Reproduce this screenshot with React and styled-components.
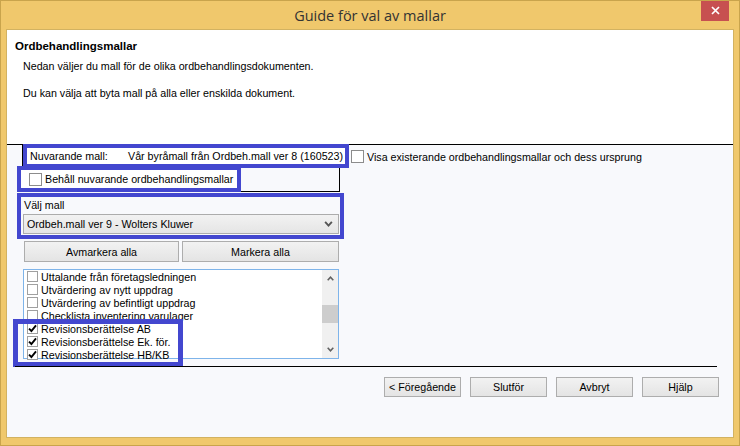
import React from 'react';
import styled, { createGlobalStyle } from 'styled-components';

const HIGHLIGHT = '#4347CF';

const GlobalStyle = createGlobalStyle`
  html, body {
    margin: 0;
    padding: 0;
  }
  body {
    font-family: "Liberation Sans", Arial, sans-serif;
    font-size: 10.7px;
    color: #000;
  }
  * {
    box-sizing: border-box;
  }
`;

const Window = styled.div`
  width: 740px;
  height: 446px;
  background: #F0C86C;
  border: 1px solid #C9A44C;
  display: flex;
  flex-direction: column;
  overflow: hidden;
`;

const TitleBar = styled.div`
  height: 28px;
  flex: none;
  display: grid;
  grid-template-columns: 1fr auto 1fr;
  align-items: start;
`;

const Title = styled.div`
  grid-column: 2;
  font-family: "Open Sans", "Noto Sans", sans-serif;
  font-size: 14.5px;
  color: #333;
  line-height: 28px;
  padding-top: 1px;
`;

const CloseButton = styled.div`
  grid-column: 3;
  justify-self: end;
  width: 28px;
  height: 21px;
  margin: -1px 10px 0 0;
  background: #C75050;
  display: flex;
  align-items: center;
  justify-content: center;
`;

const Frame = styled.div`
  flex: 1;
  margin: 0 5px 7px;
  border: 1px solid #D2B261;
  background: #F8F9FC;
  display: flex;
  flex-direction: column;
`;

const Header = styled.div`
  height: 115px;
  flex: none;
  background: #fff;
  border-bottom: 1px solid #000;
  line-height: 14px;
`;

const HeaderTitle = styled.div`
  font-weight: bold;
  font-size: 11.5px;
  margin: 9px 0 0 8px;
`;

const Intro = styled.p`
  margin: ${p => p.$gap}px 0 0 16px;
`;

const Body = styled.div`
  flex: 1;
  display: flex;
  flex-direction: column;
  align-items: flex-start;
`;

const TopRow = styled.div`
  display: flex;
  align-items: flex-start;
  padding-left: 15px;
`;

const GroupBox = styled.div`
  width: 318px;
  height: 47px;
  border: 1px solid #000;
  border-top: none;
  display: flex;
  flex-direction: column;
`;

const CurrentRow = styled.div`
  flex: none;
  width: 318px;
  height: 16px;
  margin: 3px 0 0 4px;
  padding-left: 3px;
  background: #fff;
  outline: 4px solid ${HIGHLIGHT};
  display: flex;
  align-items: center;
  white-space: nowrap;
`;

const CurrentLabel = styled.span`
  width: 98px;
  flex: none;
`;

const KeepRow = styled.label`
  flex: none;
  width: 216px;
  height: 18px;
  margin: 6px 0 0 -2px;
  padding-left: 8px;
  background: #fff;
  outline: 4px solid ${HIGHLIGHT};
  display: flex;
  align-items: center;
  gap: 3px;
  white-space: nowrap;
`;

const ShowRow = styled.label`
  margin: 5px 0 0 11px;
  display: flex;
  align-items: center;
  gap: 3px;
  white-space: nowrap;
`;

const Box = styled.span`
  flex: none;
  width: ${p => p.$size}px;
  height: ${p => p.$size}px;
  border: 1px solid ${p => p.$border};
  background: #fff;
  display: flex;
  align-items: center;
  justify-content: center;
`;

const ChooseGroup = styled.div`
  width: 319px;
  height: 38px;
  margin: 5px 0 0 14px;
  padding-left: 2px;
  outline: 4px solid ${HIGHLIGHT};
`;

const ChooseLabel = styled.div`
  line-height: 15px;
  padding: 1px 0 0 1px;
`;

const Combo = styled.div`
  width: 316px;
  height: 20px;
  margin-top: 1px;
  border: 1px solid #ACACAC;
  background: linear-gradient(#F2F2F2, #E5E5E5);
  display: flex;
  align-items: center;
  justify-content: space-between;
  padding: 0 5px 0 3px;
`;

const MarkRow = styled.div`
  width: 315px;
  margin: 6px 0 0 17px;
  display: grid;
  grid-template-columns: 155px 157px;
  gap: 3px;
`;

const Button = styled.div`
  width: ${p => p.$width || 'auto'};
  height: ${p => p.$height}px;
  border: 1px solid #ADADAD;
  background: linear-gradient(#F2F2F2, #E4E4E4);
  display: flex;
  align-items: center;
  justify-content: center;
  white-space: nowrap;
`;

const ListBox = styled.div`
  width: 316px;
  height: 90px;
  margin: 7px 0 0 16px;
  border: 1px solid #7EB4EA;
  background: #fff;
  display: flex;
`;

const Items = styled.div`
  flex: 1;
  min-width: 0;
  display: flex;
  flex-direction: column;
`;

const Item = styled.div`
  flex: none;
  height: 13px;
  padding-left: 3px;
  display: flex;
  align-items: center;
  gap: 3px;
  white-space: nowrap;
`;

const MarkedItems = styled.div`
  flex: none;
  width: 164px;
  margin-left: -8px;
  padding: 0 0 3px 8px;
  outline: 5px solid ${HIGHLIGHT};
  outline-offset: -2px;
  display: flex;
  flex-direction: column;
`;

const Scrollbar = styled.div`
  width: 16px;
  flex: none;
  background: #F0F0F0;
  display: flex;
  flex-direction: column;
`;

const ScrollArrow = styled.div`
  height: 17px;
  flex: none;
  display: flex;
  align-items: center;
  justify-content: center;
`;

const Track = styled.div`
  flex: 1;
  padding-top: 18px;
`;

const Thumb = styled.div`
  height: 18px;
  background: #CDCDCD;
`;

const Divider = styled.div`
  align-self: stretch;
  height: 1px;
  margin: 7px 16px 0 8px;
  background: #000;
`;

const Footer = styled.div`
  align-self: stretch;
  margin-top: 10px;
  padding-right: 14px;
  display: flex;
  justify-content: flex-end;
  gap: 9px;
`;

const Check = () => (
  <svg width="9" height="9" viewBox="0 0 9 9">
    <path d="M1 4.6 L3.4 7 L8 1.4" fill="none" stroke="#000" strokeWidth="1.9" />
  </svg>
);

const CheckBox = ({ checked, size = 13, border = '#8C8C8C' }) => (
  <Box $size={size} $border={border}>{checked && <Check />}</Box>
);

const Chevron = ({ up, color = '#606060', w = 7, h = 5 }) => (
  <svg width={w} height={h} viewBox="0 0 7 5">
    <path d={up ? 'M0.7 4.2 L3.5 1.2 L6.3 4.2' : 'M0.7 0.8 L3.5 3.8 L6.3 0.8'} fill="none" stroke={color} strokeWidth="1.6" />
  </svg>
);

const plainItems = [
  'Uttalande från företagsledningen',
  'Utvärdering av nytt uppdrag',
  'Utvärdering av befintligt uppdrag',
  'Checklista inventering varulager',
];

const checkedItems = [
  'Revisionsberättelse AB',
  'Revisionsberättelse Ek. för.',
  'Revisionsberättelse HB/KB',
];

export default function App() {
  return (
    <>
      <GlobalStyle />
      <Window>
        <TitleBar>
          <Title>Guide för val av mallar</Title>
          <CloseButton>
            <svg width="9" height="9" viewBox="0 0 9 9">
              <path d="M1 1 L8 8 M8 1 L1 8" stroke="#fff" strokeWidth="1.7" />
            </svg>
          </CloseButton>
        </TitleBar>
        <Frame>
          <Header>
            <HeaderTitle>Ordbehandlingsmallar</HeaderTitle>
            <Intro $gap={6}>Nedan väljer du mall för de olika ordbehandlingsdokumenten.</Intro>
            <Intro $gap={13}>Du kan välja att byta mall på alla eller enskilda dokument.</Intro>
          </Header>
          <Body>
            <TopRow>
              <GroupBox>
                <CurrentRow>
                  <CurrentLabel>Nuvarande mall:</CurrentLabel>
                  <span>Vår byråmall från Ordbeh.mall ver 8 (160523)</span>
                </CurrentRow>
                <KeepRow>
                  <CheckBox />
                  Behåll nuvarande ordbehandlingsmallar
                </KeepRow>
              </GroupBox>
              <ShowRow>
                <CheckBox />
                Visa existerande ordbehandlingsmallar och dess ursprung
              </ShowRow>
            </TopRow>
            <ChooseGroup>
              <ChooseLabel>Välj mall</ChooseLabel>
              <Combo>
                <span>Ordbeh.mall ver 9 - Wolters Kluwer</span>
                <Chevron color="#555" w={9} h={6} />
              </Combo>
            </ChooseGroup>
            <MarkRow>
              <Button $height={21}>Avmarkera alla</Button>
              <Button $height={21}>Markera alla</Button>
            </MarkRow>
            <ListBox>
              <Items>
                {plainItems.map(t => (
                  <Item key={t}>
                    <CheckBox size={11} border="#A0A0A0" />
                    {t}
                  </Item>
                ))}
                <MarkedItems>
                  {checkedItems.map(t => (
                    <Item key={t}>
                      <CheckBox size={11} border="#A0A0A0" checked />
                      {t}
                    </Item>
                  ))}
                </MarkedItems>
              </Items>
              <Scrollbar>
                <ScrollArrow><Chevron up /></ScrollArrow>
                <Track><Thumb /></Track>
                <ScrollArrow><Chevron /></ScrollArrow>
              </Scrollbar>
            </ListBox>
            <Divider />
            <Footer>
              <Button $width="77px" $height={20}>&lt; Föregående</Button>
              <Button $width="77px" $height={20}>Slutför</Button>
              <Button $width="77px" $height={20}>Avbryt</Button>
              <Button $width="77px" $height={20}>Hjälp</Button>
            </Footer>
          </Body>
        </Frame>
      </Window>
    </>
  );
}
